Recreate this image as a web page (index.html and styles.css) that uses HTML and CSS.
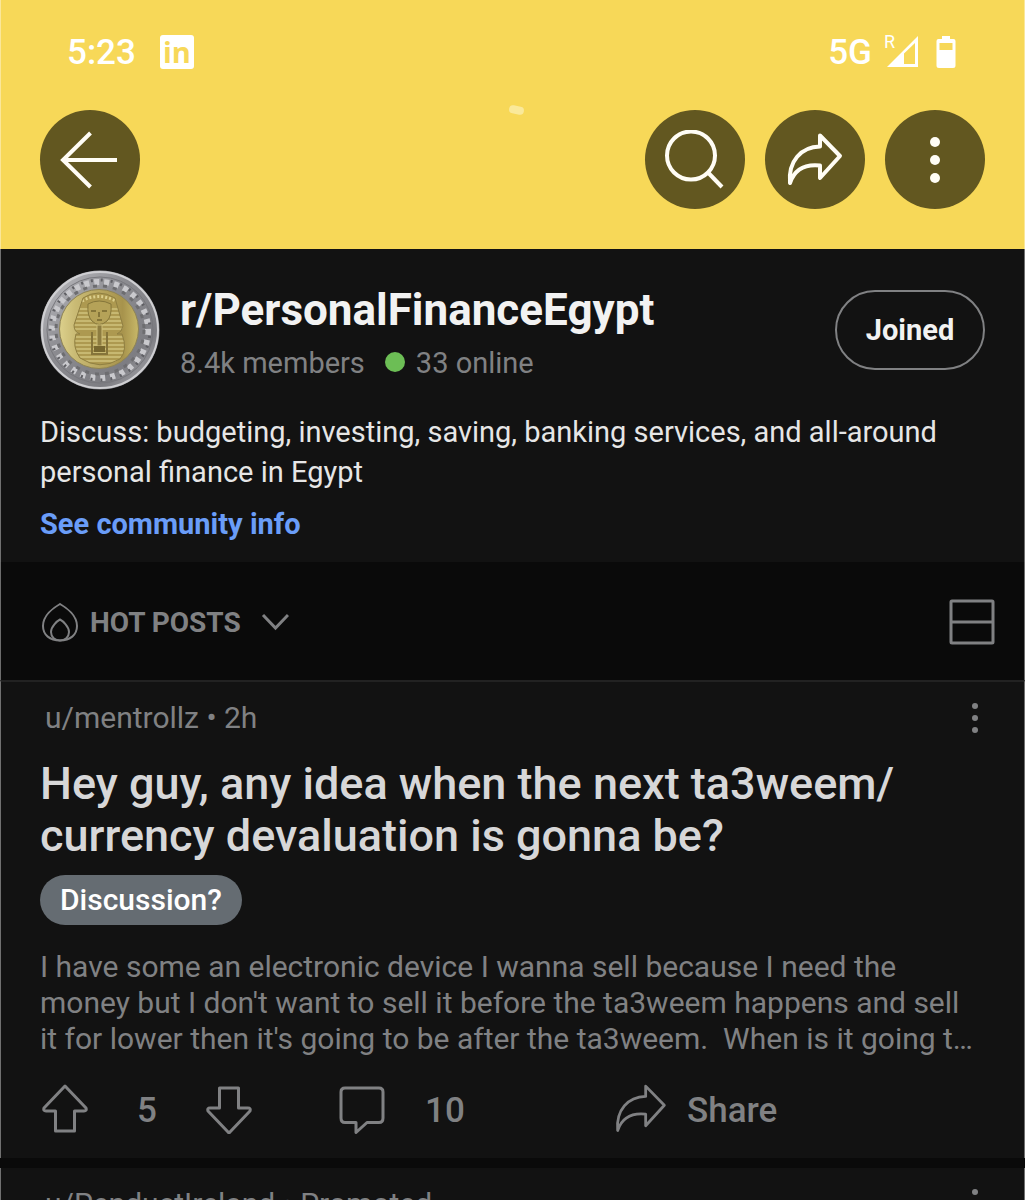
FILE: index.html
```html
<!DOCTYPE html>
<html lang="en">
<head>
  <meta charset="UTF-8" />
  <meta name="viewport" content="width=device-width, initial-scale=1.0" />
  <title>r/PersonalFinanceEgypt</title>
  <link rel="stylesheet" href="styles.css">
</head>
<body>
  <div class="screen">
    <header class="banner">
      <div class="status-bar">
        <span class="time">5:23</span>
        <span class="linkedin">in</span>
        <span class="network">5G</span>
        <span class="roaming">R</span>
        <svg class="signal" width="32" height="32" viewBox="0 0 32 32">
          <path d="M0 31 L31 0 V31 Z" fill="#fff" />
          <path d="M17 17.500 L28 7 V28 H17 Z" fill="#f7d858" />
        </svg>
        <svg class="battery" width="20" height="32" viewBox="0 0 20 32">
          <path d="M6 0 H14 V3 H17.500 Q19.500 3 19.500 5 V29.500 Q19.500 32 17 32 H3 Q.5 32 .5 29.500 V5 Q.5 3 2.500 3 H6 Z" fill="#fff" />
          <path d="M3.500 7 H16.500 V14 H3.500 Z" fill="#f7d858" />
        </svg>
      </div>
      <span class="glare"></span>
      <nav class="toolbar">
        <button class="round-btn back" aria-label="Back">
          <svg width="60" height="60" viewBox="0 0 60 60"><path d="M30.500 3 L3 30 L30.500 57 M3 30 H57" /></svg>
        </button>
        <button class="round-btn" aria-label="Search">
          <svg width="60" height="60" viewBox="0 0 60 60"><circle cx="26" cy="25.500" r="24" /><path d="M42.500 42 L57 57" /></svg>
        </button>
        <button class="round-btn" aria-label="Share">
          <svg width="60" height="60" viewBox="0 0 60 60"><path d="M5 53 C3 31 16 17 35 16.500 V5.500 L55 26 L35 48 V35.500 C21 34 10 38 5 53 Z" stroke-linejoin="round" /></svg>
        </button>
        <button class="round-btn" aria-label="More">
          <svg class="dots" width="60" height="60" viewBox="0 0 60 60"><circle cx="30" cy="12" r="5" /><circle cx="30" cy="30" r="5" /><circle cx="30" cy="48" r="5" /></svg>
        </button>
      </nav>
    </header>

    <section class="community">
      <div class="community-top">
        <svg class="avatar" width="120" height="120" viewBox="0 0 120 120">
          <defs>
            <linearGradient id="silver" x1="0" y1="0" x2="1" y2="1">
              <stop offset="0" stop-color="#c4c4c8" />
              <stop offset=".4" stop-color="#8b8b90" />
              <stop offset=".75" stop-color="#7d7d82" />
              <stop offset="1" stop-color="#b9b9bd" />
            </linearGradient>
            <linearGradient id="gold" x1="0" y1="0" x2="1" y2="0">
              <stop offset="0" stop-color="#dcd08c" />
              <stop offset=".2" stop-color="#c9ba74" />
              <stop offset=".8" stop-color="#a7934c" />
              <stop offset="1" stop-color="#c8b868" />
            </linearGradient>
            <clipPath id="mask">
              <path d="M43 28 Q58 18 75 28 L83 56 Q82 62 77 64 H82 Q88 80 80 89 Q60 101 40 88 Q32 77 36 64 H40 Q34 62 34 55 Z" />
            </clipPath>
          </defs>
          <circle cx="60" cy="60" r="59.500" fill="url(#silver)" />
          <circle cx="60" cy="60" r="58" fill="none" stroke="#cfcfd2" stroke-width="2" />
          <circle cx="60" cy="60" r="53" fill="none" stroke="#77777c" stroke-width="1" />
          <circle cx="60" cy="60" r="48" fill="none" stroke="#c9c9cd" stroke-width="6" stroke-dasharray="5 5" />
          <circle cx="60" cy="60" r="50" fill="none" stroke="#606065" stroke-width="3" stroke-dasharray="2 8" stroke-dashoffset="4" />
          <circle cx="60" cy="60" r="44" fill="none" stroke="#6d6d70" stroke-width="3" stroke-dasharray="4 6" />
          <circle cx="59" cy="59" r="39.500" fill="url(#gold)" stroke="#8f8454" stroke-width="1" />
          <g clip-path="url(#mask)">
            <path d="M30 16 H90 V100 H30 Z" fill="#ad9950" />
            <path d="M32 39 H84 M32 43 H84 M32 47 H84 M32 51 H84 M32 55 H84 M32 59 H84 M34 67 H84 M34 71 H84 M34 75 H84 M34 79 H84 M34 83 H84 M34 87 H84 M34 91 H84" stroke="#d0c27c" stroke-width="1.500" />
            <path d="M42 31 Q58 22 76 31" fill="none" stroke="#dccf8c" stroke-width="3" stroke-dasharray="2 2" />
          </g>
          <path d="M48 34 Q59 28 71 34 Q72 46 67 51 Q59 58 52 51 Q47 46 48 34 Z" fill="#b5a258" stroke="#85763a" />
          <path d="M51 41 H56 M62 41 H67 M57 50 H62 M59 42 V47" stroke="#75672f" stroke-width="1.500" />
          <path d="M57 55 H62 V76 H57 Z" fill="#8d7c40" stroke="#cdbd76" />
          <path d="M52 62 V84 H67 V62" fill="none" stroke="#85743a" stroke-width="2" />
          <path d="M54 76 H65 V82 H54 Z" fill="#77672f" />
          <path d="M43 28 Q58 18 75 28 L83 56 Q82 62 77 64 H82 Q88 80 80 89 Q60 101 40 88 Q32 77 36 64 H40 Q34 62 34 55 Z" fill="none" stroke="#8f7f42" />
        </svg>
        <div class="community-name">
          <h1>r/PersonalFinanceEgypt</h1>
          <p class="members">8.4k members <span class="online-dot"></span> 33 online</p>
        </div>
        <button class="joined">Joined</button>
      </div>
      <p class="description">Discuss: budgeting, investing, saving, banking services, and all-around personal finance in Egypt</p>
      <a class="info-link" href="#">See community info</a>
    </section>

    <div class="sort-bar">
      <button class="sort">
        <svg width="40" height="40" viewBox="0 0 40 40">
          <path d="M20 2 C27 6 37 14 37 24 C37 33 30 38.500 20 38.500 C10 38.500 3 33 3 24 C3 14 13 6 20 2 Z" />
          <path d="M20 17.500 C23 19 29 25 29 30 C29 35 25 38.500 20 38.500 C15 38.500 11 35 11 30 C11 25 17 19 20 17.500 Z" />
        </svg>
        <span>HOT POSTS</span>
        <svg class="chevron" width="28" height="20" viewBox="0 0 28 20"><path d="M2 3 L14.500 16 L27 3" /></svg>
      </button>
      <button class="layout-btn" aria-label="Change layout">
        <svg width="46" height="46" viewBox="0 0 46 46"><rect x="2" y="2" width="42" height="42" rx="1" /><path d="M2 23 H44" /></svg>
      </button>
    </div>

    <article class="post">
      <div class="post-meta">
        <span>u/mentrollz • 2h</span>
        <button aria-label="Post options">
          <svg class="dots" width="20" height="32" viewBox="0 0 20 32"><circle cx="10" cy="4" r="3" /><circle cx="10" cy="16" r="3" /><circle cx="10" cy="28" r="3" /></svg>
        </button>
      </div>
      <h2>Hey guy, any idea when the next ta3weem/<br>currency devaluation is gonna be?</h2>
      <span class="flair">Discussion?</span>
      <p class="post-text">I have some an electronic device I wanna sell because I need the<br>money but I don't want to sell it before the ta3weem happens and sell<br>it for lower then it's going to be after the ta3weem.&nbsp; When is it going t…</p>
      <div class="actions">
        <div class="votes">
          <button aria-label="Upvote">
            <svg width="46" height="50" viewBox="0 0 46 50"><path d="M23 2 L44 24 Q45 27 42 27 H32.500 V47 H13.500 V27 H4 Q1 27 2 24 Z" /></svg>
          </button>
          <span>5</span>
          <button aria-label="Downvote">
            <svg width="46" height="50" viewBox="0 0 46 50"><path d="M23 49 L44 27 Q45 24 42 24 H32.500 V4 H13.500 V24 H4 Q1 24 2 27 Z" /></svg>
          </button>
        </div>
        <button class="comments">
          <svg width="46" height="50" viewBox="0 0 46 50"><path d="M6 4 H40 Q44 4 44 8 V34 Q44 38.500 40 38.500 H28 L17 48.500 V38.500 H6 Q2 38.500 2 34 V8 Q2 4 6 4 Z" /></svg>
          <span>10</span>
        </button>
        <button class="share">
          <svg width="56" height="56" viewBox="0 0 60 60"><path d="M5 53 C3 31 16 17 35 16.500 V5.500 L55 26 L35 48 V35.500 C21 34 10 38 5 53 Z" /></svg>
          <span>Share</span>
        </button>
      </div>
    </article>

    <article class="post">
      <div class="post-meta">
        <span>u/PenductIreland • Promoted</span>
        <button aria-label="Post options">
          <svg class="dots" width="20" height="32" viewBox="0 0 20 32"><circle cx="10" cy="4" r="3" /><circle cx="10" cy="16" r="3" /><circle cx="10" cy="28" r="3" /></svg>
        </button>
      </div>
    </article>
  </div>
</body>
</html>
```
FILE: styles.css
```css
* {
  box-sizing: border-box;
}
body {
  background: #0a0a0a;
  margin: 0;
  font-family: Roboto, 'Liberation Sans', sans-serif;
  color: #808183;
}
h1, h2, p {
  margin: 0;
}
button {
  background: none;
  border: none;
  padding: 0;
  color: inherit;
  font: inherit;
  cursor: pointer;
}
svg {
  display: block;
  flex-shrink: 0;
  fill: none;
  stroke: none;
}
.screen {
  height: 100vh;
  overflow: hidden;
}
.banner, .community, .sort-bar, .post {
  border: 0 solid rgba(255, 255, 255, 0.4);
  border-left-width: 1px;
  border-right-width: 1px;
}

/* Banner */
.banner {
  position: relative;
  background: #f7d858;
  color: #fff;
  padding: 32px 39px 40px;
}
.status-bar {
  display: flex;
  align-items: center;
  height: 40px;
  padding: 0 29px 0 27px;
  font-size: 35px;
  font-weight: 500;
}
.linkedin {
  width: 34px;
  height: 34px;
  margin-left: 24px;
  border-radius: 3px;
  background: #fff;
  color: #f7d858;
  font: bold 29px/34px 'Open Sans', sans-serif;
  text-align: center;
}
.network {
  margin-left: auto;
}
.roaming {
  align-self: flex-start;
  margin-left: 12px;
  font-size: 18px;
  font-weight: 400;
  line-height: 20px;
}
.signal {
  margin-left: -8px;
}
.battery {
  margin-left: 17px;
}
.glare {
  position: absolute;
  top: 106px;
  left: 50%;
  width: 15px;
  height: 8px;
  margin-left: -4px;
  border-radius: 4px;
  background: #fae99a;
  transform: rotate(12deg);
}
.toolbar {
  display: flex;
  gap: 20px;
  margin-top: 38px;
}
.round-btn {
  display: flex;
  align-items: center;
  justify-content: center;
  width: 100px;
  height: 99px;
  border-radius: 50%;
  background: #625720;
}
.round-btn svg {
  stroke: #fffdf5;
  stroke-width: 4;
}
.round-btn.back {
  margin-right: auto;
}
.round-btn .dots {
  fill: #fffdf5;
  stroke: none;
}

/* Community info */
.community {
  background: #121212;
  padding: 21px 39px 18px;
}
.community-top {
  display: flex;
  align-items: center;
}
.community-name {
  margin: 0 auto 0 20px;
  padding-top: 10px;
}
.community h1 {
  color: #f2f2f2;
  font-size: 44px;
  line-height: 56px;
}
.members {
  display: flex;
  align-items: center;
  font-size: 29px;
  line-height: 50px;
}
.online-dot {
  width: 20px;
  height: 20px;
  margin: 0 11px 2px 20px;
  border-radius: 50%;
  background: #6cbe55;
}
.joined {
  width: 150px;
  height: 80px;
  border: 2px solid #808183;
  border-radius: 40px;
  color: #f2f2f2;
  font-size: 29px;
  font-weight: bold;
}
.description {
  margin-top: 22px;
  color: #e6e6e6;
  font-size: 29px;
  line-height: 40px;
}
.info-link {
  display: block;
  margin-top: 12px;
  color: #6a9df8;
  font-size: 29px;
  font-weight: bold;
  line-height: 40px;
  text-decoration: none;
}

/* Sort bar */
.sort-bar {
  display: flex;
  align-items: center;
  justify-content: space-between;
  height: 118px;
  padding: 2px 29px 0 39px;
}
.sort {
  display: flex;
  align-items: center;
  gap: 10px;
  font-size: 28px;
  font-weight: bold;
}
.sort-bar svg {
  stroke: #808183;
  stroke-width: 2;
}
.sort-bar .chevron {
  margin-left: 10px;
  stroke-width: 3;
}
.sort-bar .layout-btn svg {
  stroke-width: 3;
}

/* Posts */
.post {
  margin-bottom: 10px;
  padding: 16px 39px 19px;
  background: #121212;
}
.sort-bar + .post {
  border-top: 2px solid #222;
}
.post-meta {
  display: flex;
  align-items: center;
  justify-content: space-between;
  padding-left: 5px;
  font-size: 30px;
  line-height: 40px;
}
.post-meta .dots {
  fill: #808183;
}
.post h2 {
  margin-top: 20px;
  color: #d7d7d8;
  font-size: 45px;
  font-weight: 500;
  line-height: 52px;
}
.flair {
  display: inline-block;
  margin-top: 13px;
  padding: 0 20px;
  border-radius: 25px;
  background: #656c72;
  color: #fff;
  font-size: 30px;
  font-weight: 500;
  line-height: 50px;
}
.post-text {
  margin-top: 24px;
  font-size: 30px;
  line-height: 36px;
  white-space: nowrap;
}
.actions {
  display: grid;
  grid-template-columns: 297fr 274fr 372fr;
  align-items: center;
  height: 60px;
  margin-top: 22px;
  padding-left: 2px;
  font-size: 35px;
  font-weight: 500;
}
.actions svg {
  stroke: #808183;
  stroke-width: 3;
  stroke-linejoin: round;
}
.actions span {
  padding-top: 2px;
}
.votes, .comments, .share {
  display: flex;
  align-items: center;
}
.votes {
  gap: 49px;
}
.comments {
  gap: 40px;
}
.share {
  gap: 18px;
}
```
